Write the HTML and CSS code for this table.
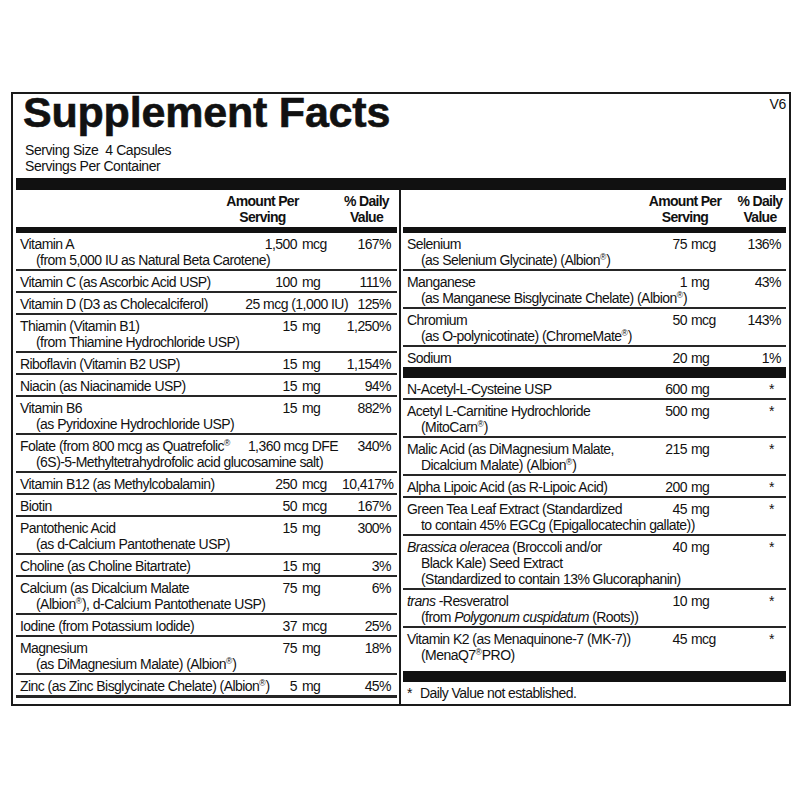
FILE: index.html
```html
<!DOCTYPE html>
<html lang="en">
<head>
<meta charset="utf-8">
<title>Supplement Facts</title>
<link rel="stylesheet" href="styles.css">
</head>
<body>
<div class="page">
  <div class="box">
    <div class="top">
      <h1 class="title">Supplement Facts</h1>
      <div class="ver">V6</div>
    </div>
    <div class="serving">
      <div>Serving Size&nbsp; 4 Capsules</div>
      <div>Servings Per Container</div>
    </div>
    <div class="topbar"></div>
    <div class="cols">
      <div class="col col-left">
        <div class="head">
          <div class="h-amt">Amount Per<br>Serving</div>
          <div class="h-dv">% Daily<br>Value</div>
        </div>
        <div class="row">
          <div class="line"><span class="name">Vitamin A</span><span class="amt"><span class="num">1,500</span><span class="unit">mcg</span></span><span class="dv">167%</span></div>
          <div class="sub">(from 5,000 IU as Natural Beta Carotene)</div>
        </div>
        <div class="row">
          <div class="line"><span class="name">Vitamin C (as Ascorbic Acid USP)</span><span class="amt"><span class="num">100</span><span class="unit">mg</span></span><span class="dv">111%</span></div>
        </div>
        <div class="row">
          <div class="line"><span class="name">Vitamin D (D3 as Cholecalciferol)</span><span class="amt amt-auto">25 mcg (1,000 IU)</span><span class="dv dv-narrow">125%</span></div>
        </div>
        <div class="row">
          <div class="line"><span class="name">Thiamin (Vitamin B1)</span><span class="amt"><span class="num">15</span><span class="unit">mg</span></span><span class="dv">1,250%</span></div>
          <div class="sub">(from Thiamine Hydrochloride USP)</div>
        </div>
        <div class="row">
          <div class="line"><span class="name">Riboflavin (Vitamin B2 USP)</span><span class="amt"><span class="num">15</span><span class="unit">mg</span></span><span class="dv">1,154%</span></div>
        </div>
        <div class="row">
          <div class="line"><span class="name">Niacin (as Niacinamide USP)</span><span class="amt"><span class="num">15</span><span class="unit">mg</span></span><span class="dv">94%</span></div>
        </div>
        <div class="row">
          <div class="line"><span class="name">Vitamin B6</span><span class="amt"><span class="num">15</span><span class="unit">mg</span></span><span class="dv">882%</span></div>
          <div class="sub">(as Pyridoxine Hydrochloride USP)</div>
        </div>
        <div class="row">
          <div class="line"><span class="name">Folate (from 800 mcg as Quatrefolic<sup class="r">®</sup></span><span class="amt amt-auto amt-pad">1,360 mcg DFE</span><span class="dv">340%</span></div>
          <div class="sub">(6S)-5-Methyltetrahydrofolic acid glucosamine salt)</div>
        </div>
        <div class="row">
          <div class="line"><span class="name">Vitamin B12 (as Methylcobalamin)</span><span class="amt"><span class="num">250</span><span class="unit">mcg</span></span><span class="dv">10,417%</span></div>
        </div>
        <div class="row">
          <div class="line"><span class="name">Biotin</span><span class="amt"><span class="num">50</span><span class="unit">mcg</span></span><span class="dv">167%</span></div>
        </div>
        <div class="row">
          <div class="line"><span class="name">Pantothenic Acid</span><span class="amt"><span class="num">15</span><span class="unit">mg</span></span><span class="dv">300%</span></div>
          <div class="sub">(as d-Calcium Pantothenate USP)</div>
        </div>
        <div class="row">
          <div class="line"><span class="name">Choline (as Choline Bitartrate)</span><span class="amt"><span class="num">15</span><span class="unit">mg</span></span><span class="dv">3%</span></div>
        </div>
        <div class="row">
          <div class="line"><span class="name">Calcium (as Dicalcium Malate</span><span class="amt"><span class="num">75</span><span class="unit">mg</span></span><span class="dv">6%</span></div>
          <div class="sub">(Albion<sup class="r">®</sup>), d-Calcium Pantothenate USP)</div>
        </div>
        <div class="row">
          <div class="line"><span class="name">Iodine (from Potassium Iodide)</span><span class="amt"><span class="num">37</span><span class="unit">mcg</span></span><span class="dv">25%</span></div>
        </div>
        <div class="row">
          <div class="line"><span class="name">Magnesium</span><span class="amt"><span class="num">75</span><span class="unit">mg</span></span><span class="dv">18%</span></div>
          <div class="sub">(as DiMagnesium Malate) (Albion<sup class="r">®</sup>)</div>
        </div>
        <div class="row row-last">
          <div class="line"><span class="name">Zinc (as Zinc Bisglycinate Chelate) (Albion<sup class="r">®</sup>)</span><span class="amt"><span class="num">5</span><span class="unit">mg</span></span><span class="dv">45%</span></div>
        </div>
      </div>

      <div class="divider"></div>

      <div class="col col-right">
        <div class="head">
          <div class="h-amt">Amount Per<br>Serving</div>
          <div class="h-dv">% Daily<br>Value</div>
        </div>
        <div class="row">
          <div class="line"><span class="name">Selenium</span><span class="amt"><span class="num">75</span><span class="unit">mcg</span></span><span class="dv">136%</span></div>
          <div class="sub">(as Selenium Glycinate) (Albion<sup class="r">®</sup>)</div>
        </div>
        <div class="row">
          <div class="line"><span class="name">Manganese</span><span class="amt"><span class="num">1</span><span class="unit">mg</span></span><span class="dv">43%</span></div>
          <div class="sub">(as Manganese Bisglycinate Chelate) (Albion<sup class="r">®</sup>)</div>
        </div>
        <div class="row">
          <div class="line"><span class="name">Chromium</span><span class="amt"><span class="num">50</span><span class="unit">mcg</span></span><span class="dv">143%</span></div>
          <div class="sub">(as O-polynicotinate) (ChromeMate<sup class="r">®</sup>)</div>
        </div>
        <div class="row row-nb">
          <div class="line"><span class="name">Sodium</span><span class="amt"><span class="num">20</span><span class="unit">mg</span></span><span class="dv">1%</span></div>
        </div>
        <div class="bar"></div>
        <div class="row">
          <div class="line"><span class="name">N-Acetyl-L-Cysteine USP</span><span class="amt"><span class="num">600</span><span class="unit">mg</span></span><span class="dv star">*</span></div>
        </div>
        <div class="row">
          <div class="line"><span class="name">Acetyl L-Carnitine Hydrochloride</span><span class="amt"><span class="num">500</span><span class="unit">mg</span></span><span class="dv star">*</span></div>
          <div class="sub">(MitoCarn<sup class="r">®</sup>)</div>
        </div>
        <div class="row">
          <div class="line"><span class="name">Malic Acid (as DiMagnesium Malate,</span><span class="amt"><span class="num">215</span><span class="unit">mg</span></span><span class="dv star">*</span></div>
          <div class="sub">Dicalcium Malate) (Albion<sup class="r">®</sup>)</div>
        </div>
        <div class="row">
          <div class="line"><span class="name">Alpha Lipoic Acid (as R-Lipoic Acid)</span><span class="amt"><span class="num">200</span><span class="unit">mg</span></span><span class="dv star">*</span></div>
        </div>
        <div class="row">
          <div class="line"><span class="name">Green Tea Leaf Extract (Standardized</span><span class="amt"><span class="num">45</span><span class="unit">mg</span></span><span class="dv star">*</span></div>
          <div class="sub">to contain 45% EGCg (Epigallocatechin gallate))</div>
        </div>
        <div class="row">
          <div class="line"><span class="name"><i>Brassica oleracea</i> (Broccoli and/or</span><span class="amt"><span class="num">40</span><span class="unit">mg</span></span><span class="dv star">*</span></div>
          <div class="sub">Black Kale) Seed Extract</div>
          <div class="sub">(Standardized to contain 13% Glucoraphanin)</div>
        </div>
        <div class="row">
          <div class="line"><span class="name"><i>trans</i> -Resveratrol</span><span class="amt"><span class="num">10</span><span class="unit">mg</span></span><span class="dv star">*</span></div>
          <div class="sub">(from <i>Polygonum cuspidatum</i> (Roots))</div>
        </div>
        <div class="row row-nb row-k2">
          <div class="line"><span class="name">Vitamin K2 (as Menaquinone-7 (MK-7))</span><span class="amt"><span class="num">45</span><span class="unit">mcg</span></span><span class="dv star">*</span></div>
          <div class="sub">(MenaQ7<sup class="r">®</sup>PRO)</div>
        </div>
        <div class="bar"></div>
        <div class="foot"><span class="fstar">*</span>Daily Value not established.</div>
      </div>
    </div>
  </div>
</div>
</body>
</html>
```

FILE: styles.css
```css
* { box-sizing: border-box; }

html, body {
  margin: 0;
  padding: 0;
  background: #ffffff;
}

body {
  font-family: "Liberation Sans", Arial, Helvetica, sans-serif;
  font-size: 14px;
  line-height: 16px;
  color: #111111;
  letter-spacing: -0.55px;
}

.page {
  padding: 92px 0 0 11px;
}

.box {
  width: 780px;
  border: 2px solid #1a1a1a;
  padding: 0 3px;
}

.top {
  display: flex;
  justify-content: space-between;
  align-items: flex-start;
}

.title {
  margin: 0;
  padding-left: 7px;
  font-size: 43px;
  line-height: 36px;
  font-weight: 700;
  letter-spacing: -0.2px;
  -webkit-text-stroke: 0.6px #111;
}

.ver {
  margin-top: 2px;
  letter-spacing: -0.3px;
}

.serving {
  margin: 12px 0 4px;
  padding-left: 9px;
  letter-spacing: -0.43px;
}

.topbar {
  height: 12px;
  background: #111;
}

.cols {
  display: flex;
  align-items: stretch;
}

.col-left { width: 381px; }
.col-right { width: 383px; }

.divider {
  width: 2px;
  margin: 0 2px;
  background: #1a1a1a;
}

.head {
  display: flex;
  justify-content: flex-end;
  padding: 3px 0 2px;
  border-bottom: 6px solid #111;
  font-weight: 700;
  text-align: center;
  letter-spacing: -0.7px;
}

.col-left .head { padding-right: 6px; }
.col-left .h-amt { width: 73px; margin-right: 43px; }
.col-left .h-dv { width: 49px; }

.col-right .head { padding-right: 2px; }
.col-right .h-amt { width: 74px; margin-right: 14px; }
.col-right .h-dv { width: 48px; }

.row {
  padding: 3px 0 1px;
  border-bottom: 2px solid #262626;
}

.row-last { border-bottom-width: 3px; }
.row-nb { border-bottom: none; }
.row-k2 { padding-bottom: 8px; }

.line {
  display: flex;
  white-space: nowrap;
}

.col-left .line { padding-right: 6px; }
.col-right .line { padding-right: 5px; }

.name {
  flex: 1 1 auto;
  min-width: 0;
  padding-left: 4px;
  white-space: nowrap;
}

.amt {
  flex: none;
  white-space: nowrap;
}

.col-left .amt { width: 80px; }
.col-right .amt { width: 82px; }
.col-left .amt.amt-auto { width: auto; }
.amt-pad { padding-right: 4px; }

.num {
  display: inline-block;
  text-align: right;
}

.col-left .num { width: 35px; }
.col-right .num { width: 37px; }

.col-left .unit { margin-left: 5px; }
.col-right .unit { margin-left: 4px; }

.dv {
  flex: none;
  width: 49px;
  text-align: right;
}

.dv-narrow { width: 43px; }

.star { padding-right: 7px; }

.sub {
  white-space: nowrap;
}

.col-left .sub { padding-left: 20px; }
.col-right .sub { padding-left: 18px; }

.r {
  font-size: 8.5px;
  line-height: 0;
  vertical-align: 5px;
  letter-spacing: 0;
}

.bar {
  height: 11px;
  background: #111;
}

.foot {
  padding: 3px 0 3px 4px;
}

.fstar { margin-right: 8px; }
```
